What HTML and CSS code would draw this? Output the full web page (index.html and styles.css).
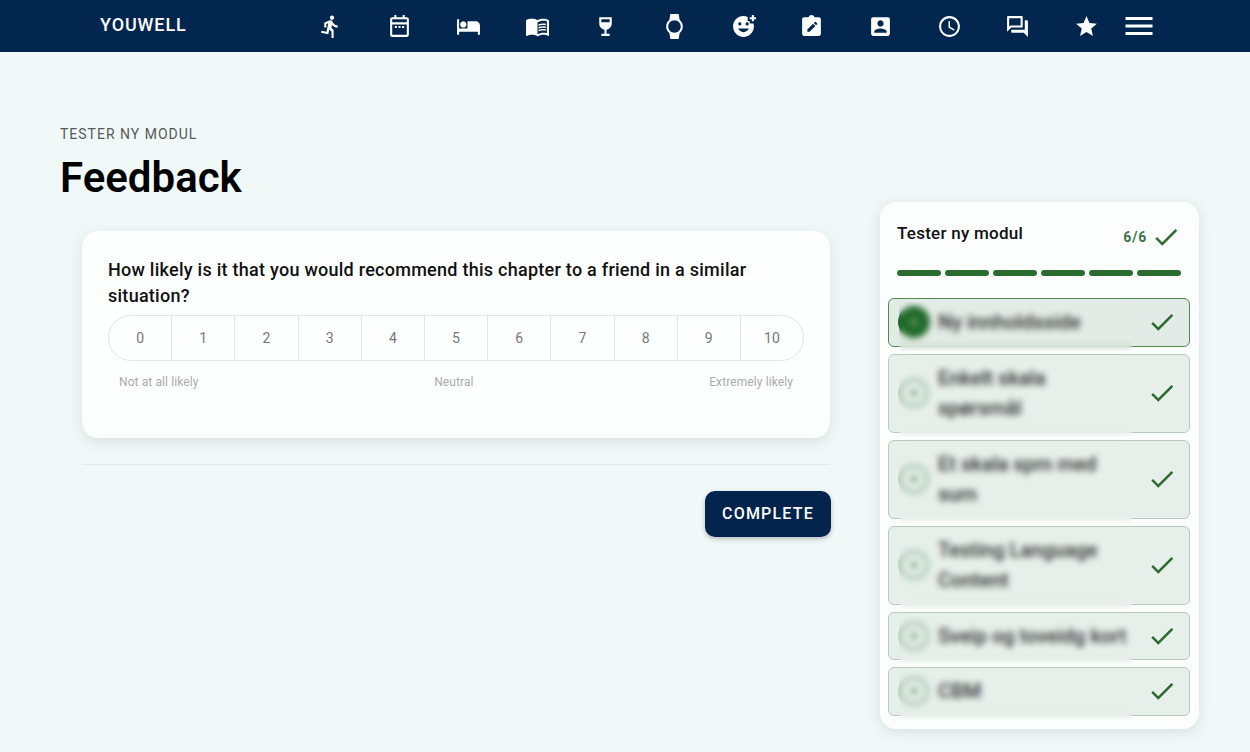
FILE: index.html
```html
<!DOCTYPE html>
<html lang="en">
<head>
    <meta charset="UTF-8">
    <meta name="viewport" content="width=device-width, initial-scale=1.0">
    <title>Feedback</title>
    <link rel="stylesheet" href="styles.css">
</head>
<body>

    <header class="topbar">
        <div class="brand">YOUWELL</div>
        <nav class="nav-links">
            <a class="nav-item"><svg viewBox="0 0 24 24"><path d="M13.49 5.48c1.1 0 2-.9 2-2s-.9-2-2-2-2 .9-2 2 .9 2 2 2zm-3.6 13.9l1-4.4 2.1 2v6h2v-7.5l-2.1-2 .6-3c1.3 1.5 3.3 2.5 5.5 2.5v-2c-1.9 0-3.5-1-4.3-2.4l-1-1.6c-.4-.6-1-1-1.7-1-.3 0-.5.1-.8.1l-5.2 2.2v4.7h2v-3.4l1.8-.7-1.6 8.1-4.9-1-.4 2 7 1.4z"/></svg></a>
            <a class="nav-item"><svg viewBox="0 0 24 24"><path d="M7 1h2v2h6V1h2v2h2c1.1 0 2 .9 2 2v15c0 1.1-.9 2-2 2H5c-1.1 0-2-.9-2-2V5c0-1.1.9-2 2-2h2V1zM5 5v3h14V5H5zm0 5v10h14V10H5zm2.5 1.5h2v2h-2zm3.5 0h2v2h-2zm3.5 0h2v2h-2z" fill-rule="evenodd"/></svg></a>
            <a class="nav-item"><svg viewBox="0 0 24 24"><path d="M7 13c1.66 0 3-1.34 3-3S8.66 7 7 7s-3 1.34-3 3 1.34 3 3 3zm12-6h-8v7H3V5H1v15h2v-3h18v3h2v-9c0-2.21-1.79-4-4-4z"/></svg></a>
            <a class="nav-item"><svg viewBox="0 0 24 24"><path d="M21 5c-1.11-.35-2.33-.5-3.5-.5-1.95 0-4.05.4-5.5 1.5-1.45-1.1-3.55-1.5-5.5-1.5S2.45 4.9 1 6v14.65c0 .25.25.5.5.5.1 0 .15-.05.25-.05C3.1 20.45 5.05 20 6.5 20c1.95 0 4.05.4 5.5 1.5 1.35-.85 3.8-1.5 5.5-1.5 1.65 0 3.35.3 4.75 1.05.1.05.15.05.25.05.25 0 .5-.25.5-.5V6c-.6-.45-1.25-.75-2-1zm0 13.5c-1.1-.35-2.3-.5-3.5-.5-1.7 0-4.15.65-5.5 1.5V8c1.35-.85 3.8-1.5 5.5-1.5 1.2 0 2.4.15 3.5.5v11.5z"/><path d="M17.5 10.5c.88 0 1.73.09 2.5.26V9.24c-.79-.15-1.64-.24-2.5-.24-1.7 0-3.24.29-4.5.83v1.66c1.13-.64 2.7-.99 4.5-.99zM13 12.49v1.66c1.13-.64 2.7-.99 4.5-.99.88 0 1.73.09 2.5.26V11.9c-.79-.15-1.64-.24-2.5-.24-1.7 0-3.24.3-4.5.83zM17.5 14.33c-1.7 0-3.24.29-4.5.83v1.66c1.13-.64 2.7-.99 4.5-.99.88 0 1.73.09 2.5.26v-1.52c-.79-.16-1.64-.24-2.5-.24z"/></svg></a>
            <a class="nav-item"><svg viewBox="0 0 24 24"><path d="M6 3v6c0 2.97 2.16 5.43 5 5.91V19H8v2h8v-2h-3v-4.09c2.84-.48 5-2.94 5-5.91V3H6zm10 5H8V5h8v3z"/></svg></a>
            <a class="nav-item"><svg viewBox="0 0 24 24"><path d="M20 12c0-2.54-1.19-4.81-3.04-6.27L16 0H8l-.95 5.73C5.19 7.19 4 9.45 4 12s1.19 4.81 3.05 6.27L8 24h8l.96-5.73C18.81 16.81 20 14.54 20 12zM6 12c0-3.31 2.69-6 6-6s6 2.69 6 6-2.69 6-6 6-6-2.69-6-6z"/></svg></a>
            <a class="nav-item"><svg viewBox="0 0 24 24"><path d="M18 9V7h-2V2.84C14.77 2.3 13.42 2 11.99 2 6.47 2 2 6.48 2 12s4.47 10 9.99 10C17.52 22 22 17.52 22 12c0-1.05-.17-2.05-.47-3H18zm-2.5-1c.83 0 1.5.67 1.5 1.5s-.67 1.5-1.5 1.5-1.5-.67-1.5-1.5.67-1.5 1.5-1.5zm-7 0c.83 0 1.5.67 1.5 1.5S9.33 11 8.5 11 7 10.33 7 9.5 7.67 8 8.5 8zm3.5 9.5c-2.33 0-4.31-1.46-5.11-3.5h10.22c-.8 2.04-2.78 3.5-5.11 3.5zM22 3h2v2h-2v2h-2V5h-2V3h2V1h2v2z"/></svg></a>
            <a class="nav-item"><svg viewBox="0 0 24 24"><path d="M19 3h-4.18C14.4 1.84 13.3 1 12 1s-2.4.84-2.82 2H5c-1.1 0-2 .9-2 2v14c0 1.1.9 2 2 2h14c1.1 0 2-.9 2-2V5c0-1.1-.9-2-2-2zM8 17v-2.2l5.5-5.5 2.2 2.2L10.2 17H8zm8.4-6.2l-2.2-2.2 1-1c.3-.3.7-.3 1 0l1.2 1.2c.3.3.3.7 0 1l-1 1z"/></svg></a>
            <a class="nav-item"><svg viewBox="0 0 24 24"><path d="M3 5v14c0 1.1.89 2 2 2h14c1.1 0 2-.9 2-2V5c0-1.1-.9-2-2-2H5c-1.11 0-2 .9-2 2zm12 4c0 1.66-1.34 3-3 3s-3-1.34-3-3 1.34-3 3-3 3 1.34 3 3zm-9 8c0-2 4-3.1 6-3.1s6 1.1 6 3.1v1H6v-1z"/></svg></a>
            <a class="nav-item"><svg viewBox="0 0 24 24"><path d="M11.99 2C6.47 2 2 6.48 2 12s4.47 10 9.99 10C17.52 22 22 17.52 22 12S17.52 2 11.99 2zM12 20c-4.42 0-8-3.58-8-8s3.58-8 8-8 8 3.58 8 8-3.58 8-8 8zm.5-13H11v6l5.25 3.15.75-1.23-4.5-2.67z"/></svg></a>
            <a class="nav-item"><svg viewBox="0 0 24 24"><path d="M15 4v7H5.17L4 12.17V4h11m1-2H3c-.55 0-1 .45-1 1v14l4-4h10c.55 0 1-.45 1-1V3c0-.55-.45-1-1-1zm5 4h-2v9H6v2c0 .55.45 1 1 1h11l4 4V7c0-.55-.45-1-1-1z"/></svg></a>
            <a class="nav-item"><svg viewBox="0 0 24 24"><path d="M12 17.27L18.18 21l-1.64-7.03L22 9.24l-7.19-.61L12 2 9.19 8.63 2 9.24l5.46 4.73L5.82 21z"/></svg></a>
        </nav>
        <a class="menu-btn"><svg viewBox="0 0 24 24"><path d="M3 18h18v-2H3v2zm0-5h18v-2H3v2zm0-7v2h18V6H3z"/></svg></a>
    </header>

    <div class="page">
        <main class="content">
            <div class="module-label">TESTER NY MODUL</div>
            <h1>Feedback</h1>

            <section class="question-card">
                <div class="question">How likely is it that you would recommend this chapter to a friend in a similar situation?</div>
                <div class="scale">
                    <div class="scale-cell">0</div>
                    <div class="scale-cell">1</div>
                    <div class="scale-cell">2</div>
                    <div class="scale-cell">3</div>
                    <div class="scale-cell">4</div>
                    <div class="scale-cell">5</div>
                    <div class="scale-cell">6</div>
                    <div class="scale-cell">7</div>
                    <div class="scale-cell">8</div>
                    <div class="scale-cell">9</div>
                    <div class="scale-cell">10</div>
                </div>
                <div class="scale-labels">
                    <span>Not at all likely</span>
                    <span>Neutral</span>
                    <span>Extremely likely</span>
                </div>
            </section>

            <hr class="divider">

            <div class="actions">
                <button class="complete-btn">COMPLETE</button>
            </div>
        </main>

        <aside class="chapters">
            <div class="chapters-head">
                <div class="chapters-title">Tester ny modul</div>
                <div class="chapters-count">6/6 <svg class="check" viewBox="0 0 24 24"><path d="M9 16.17L4.83 12l-1.42 1.41L9 19 21 7l-1.41-1.41z"/></svg></div>
            </div>
            <div class="progress">
                <span></span><span></span><span></span><span></span><span></span><span></span>
            </div>

            <ul class="chapter-list">
                <li class="chapter active">
                    <span class="dot"></span>
                    <span class="chapter-name">Ny innholdsside</span>
                    <svg class="check" viewBox="0 0 24 24"><path d="M9 16.17L4.83 12l-1.42 1.41L9 19 21 7l-1.41-1.41z"/></svg>
                    <span class="blur-over"></span>
                </li>
                <li class="chapter">
                    <span class="dot"></span>
                    <span class="chapter-name">Enkelt skala<br>spørsmål</span>
                    <svg class="check" viewBox="0 0 24 24"><path d="M9 16.17L4.83 12l-1.42 1.41L9 19 21 7l-1.41-1.41z"/></svg>
                    <span class="blur-over"></span>
                </li>
                <li class="chapter">
                    <span class="dot"></span>
                    <span class="chapter-name">Et skala spm med<br>sum</span>
                    <svg class="check" viewBox="0 0 24 24"><path d="M9 16.17L4.83 12l-1.42 1.41L9 19 21 7l-1.41-1.41z"/></svg>
                    <span class="blur-over"></span>
                </li>
                <li class="chapter">
                    <span class="dot"></span>
                    <span class="chapter-name">Testing Language<br>Content</span>
                    <svg class="check" viewBox="0 0 24 24"><path d="M9 16.17L4.83 12l-1.42 1.41L9 19 21 7l-1.41-1.41z"/></svg>
                    <span class="blur-over"></span>
                </li>
                <li class="chapter">
                    <span class="dot"></span>
                    <span class="chapter-name">Sveip og toveidg kort</span>
                    <svg class="check" viewBox="0 0 24 24"><path d="M9 16.17L4.83 12l-1.42 1.41L9 19 21 7l-1.41-1.41z"/></svg>
                    <span class="blur-over"></span>
                </li>
                <li class="chapter">
                    <span class="dot"></span>
                    <span class="chapter-name">CBM</span>
                    <svg class="check" viewBox="0 0 24 24"><path d="M9 16.17L4.83 12l-1.42 1.41L9 19 21 7l-1.41-1.41z"/></svg>
                    <span class="blur-over"></span>
                </li>
            </ul>
        </aside>
    </div>

</body>
</html>
```

FILE: styles.css
```css
* {
    box-sizing: border-box;
}
body {
    margin: 0;
    height: 100vh;
    overflow: hidden;
    font-family: Roboto, Arial, sans-serif;
    color: #000000;
    background-color: #f1f9f8;
}

/* Top bar */
.topbar {
    display: flex;
    align-items: center;
    height: 52px;
    padding-left: 100px;
    background-color: #03264f;
    color: #ffffff;
}
.brand {
    width: 196.6px;
    padding-bottom: 4px;
    font-size: 18px;
    font-weight: 500;
    letter-spacing: 0.9px;
}
.nav-links {
    display: flex;
}
.nav-item {
    display: flex;
    justify-content: center;
    width: 68.7px;
}
.nav-item svg {
    width: 25px;
    height: 25px;
    fill: #ffffff;
}
.menu-btn {
    display: flex;
}
.menu-btn svg {
    width: 36px;
    height: 36px;
    fill: #ffffff;
}

/* Page */
.page {
    display: flex;
    align-items: flex-start;
    padding-left: 60px;
}
.content {
    width: 771px;
    padding-top: 74px;
}
.module-label {
    font-size: 14px;
    line-height: 16px;
    letter-spacing: 1px;
    color: #55595c;
}
h1 {
    margin: 12px 0 0 0;
    font-size: 42px;
    line-height: 47px;
    font-weight: 600;
}

/* Question card */
.question-card {
    height: 207px;
    margin: 30px 1px 0 22px;
    padding: 26px;
    background-color: #fdfefe;
    border-radius: 16px;
    box-shadow: 0 4px 14px rgba(40, 70, 70, 0.13);
}
.question {
    font-size: 18px;
    line-height: 26px;
    font-weight: 500;
    letter-spacing: 0.26px;
    color: #111111;
}
.scale {
    display: flex;
    height: 46px;
    margin-top: 6px;
    border: 1px solid #e3e6e6;
    border-radius: 23px;
}
.scale-cell {
    flex: 1;
    display: flex;
    justify-content: center;
    align-items: center;
    font-size: 14px;
    color: #75787a;
    border-right: 1px solid #e3e6e6;
}
.scale-cell:last-child {
    border-right: none;
}
.scale-labels {
    display: flex;
    justify-content: space-between;
    padding: 14px 11px 0 11px;
    font-size: 12px;
    line-height: 14px;
    letter-spacing: 0.1px;
    color: #a9acad;
}
.divider {
    height: 1px;
    margin: 26px 1px 0 22px;
    border: none;
    background-color: #e3eaea;
}
.actions {
    display: flex;
    justify-content: flex-end;
    margin-top: 26px;
}
.complete-btn {
    width: 126px;
    height: 46px;
    padding: 0 0 2px 0;
    font-family: Roboto, Arial, sans-serif;
    font-size: 16px;
    font-weight: 500;
    letter-spacing: 1.2px;
    color: #ffffff;
    background-color: #03244d;
    border: none;
    border-radius: 10px;
    box-shadow: 0 2px 5px rgba(0, 0, 0, 0.25);
}

/* Chapter list */
.chapters {
    width: 319px;
    height: 527px;
    margin: 150px 0 0 49px;
    padding: 0 9px 0 8px;
    background-color: #fcfefd;
    border-radius: 16px;
    box-shadow: 0 3px 14px rgba(40, 70, 70, 0.14);
}
.chapters-head {
    display: flex;
    justify-content: space-between;
    padding: 20px 9px 0 9px;
    height: 68px;
}
.chapters-title {
    font-size: 17px;
    line-height: 22px;
    font-weight: 500;
    letter-spacing: 0.25px;
    color: #111111;
}
.chapters-count {
    display: flex;
    align-items: center;
    gap: 4px;
    height: 30px;
    font-size: 14px;
    font-weight: 700;
    letter-spacing: 0.8px;
    color: #3d7545;
}
.check {
    flex: none;
    width: 30px;
    height: 30px;
    fill: #2c6b2f;
}
.progress {
    display: flex;
    gap: 4px;
    padding: 0 9px;
}
.progress span {
    flex: 1;
    height: 6px;
    border-radius: 3px;
    background-color: #2c6b2f;
}
.chapter-list {
    list-style: none;
    margin: 22px 0 0 0;
    padding: 0;
    display: flex;
    flex-direction: column;
    gap: 7px;
}
.chapter {
    position: relative;
    display: flex;
    align-items: center;
    padding: 8px 12px 8px 9px;
    background-color: #e7efeb;
    border: 1px solid #b7cdb9;
    border-radius: 6px;
}
.chapter.active {
    background-color: #e3ebe6;
    border-color: #4f8a55;
}
.dot {
    flex: none;
    width: 32px;
    height: 32px;
    margin: -1px 8px -1px 0;
    border-radius: 50%;
    background: radial-gradient(circle, #93bb9a 0 4px, #f4f8f5 5px 9px, #bdd5c3 10px);
}
.active .dot {
    background: radial-gradient(circle, #4a8a50 0 4px, #1f6a28 5px);
}
.chapter-name {
    flex: 1;
    font-size: 20px;
    line-height: 30.5px;
    font-weight: 500;
    color: #2f3231;
}
.blur-over {
    position: absolute;
    top: 3px;
    bottom: -5px;
    left: 10px;
    right: 57px;
    backdrop-filter: blur(3px);
}
```
